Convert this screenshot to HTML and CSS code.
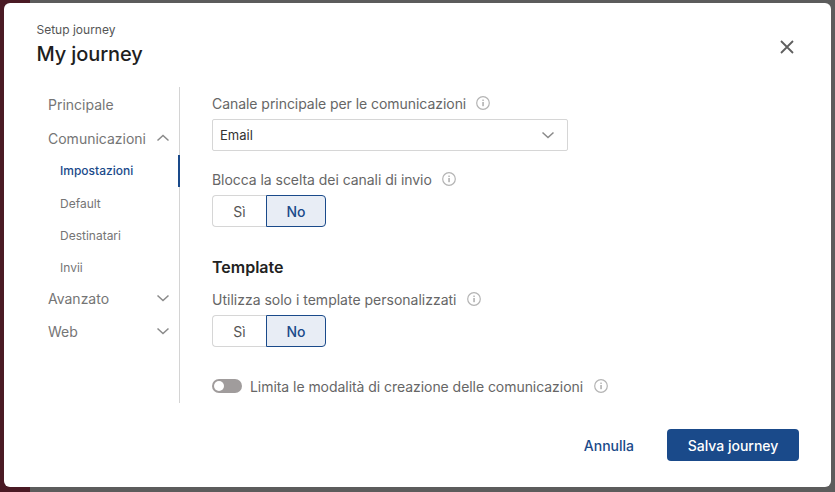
FILE: index.html
```html
<!DOCTYPE html>
<html lang="it">
<head>
  <meta charset="UTF-8" />
  <title>My journey</title>
  <link rel="stylesheet" href="styles.css">
</head>
<body>
  <svg class="icon-defs" width="0" height="0">
    <symbol id="info" viewBox="0 0 14 14">
      <circle cx="7" cy="7" r="6.3" fill="none" stroke="#b4b4b4" stroke-width="1.2" />
      <rect x="6.4" y="6" width="1.3" height="4.2" fill="#a0a0a0" />
      <rect x="6.4" y="3.6" width="1.3" height="1.3" fill="#a0a0a0" />
    </symbol>
    <symbol id="chev-down" viewBox="0 0 14 8">
      <path d="M1.5 1.5 7 6.5l5.5-5" fill="none" stroke="#8a8a8a" stroke-width="1.5" />
    </symbol>
    <symbol id="chev-up" viewBox="0 0 14 8">
      <path d="M1.5 6.5 7 1.5l5.5 5" fill="none" stroke="#8a8a8a" stroke-width="1.5" />
    </symbol>
  </svg>

  <div class="modal">
    <header class="modal-header">
      <div>
        <div class="subtitle">Setup journey</div>
        <h1 class="title">My journey</h1>
      </div>
      <button class="close-btn" aria-label="Chiudi">
        <svg width="16" height="16" viewBox="0 0 16 16"><path d="M2 2l12 12M14 2 2 14" stroke="#5f5f5f" stroke-width="1.8" fill="none" /></svg>
      </button>
    </header>

    <div class="modal-body">
      <nav class="sidenav">
        <a class="nav-item nav-first">Principale</a>
        <a class="nav-item">Comunicazioni <svg class="chev"><use href="#chev-up" /></svg></a>
        <a class="nav-sub active">Impostazioni</a>
        <a class="nav-sub">Default</a>
        <a class="nav-sub">Destinatari</a>
        <a class="nav-sub">Invii</a>
        <a class="nav-item">Avanzato <svg class="chev"><use href="#chev-down" /></svg></a>
        <a class="nav-item nav-last">Web <svg class="chev"><use href="#chev-down" /></svg></a>
      </nav>

      <main class="content">
        <div class="field-label">Canale principale per le comunicazioni <svg class="info"><use href="#info" /></svg></div>
        <div class="select">
          <span>Email</span>
          <svg class="chev"><use href="#chev-down" /></svg>
        </div>

        <div class="field-label field-gap">Blocca la scelta dei canali di invio <svg class="info"><use href="#info" /></svg></div>
        <div class="yesno">
          <button>Sì</button>
          <button class="selected">No</button>
        </div>

        <h2 class="section-title">Template</h2>
        <div class="field-label field-wide">Utilizza solo i template personalizzati <svg class="info"><use href="#info" /></svg></div>
        <div class="yesno">
          <button>Sì</button>
          <button class="selected">No</button>
        </div>

        <div class="switch-row">
          <span class="switch"></span>
          <span>Limita le modalità di creazione delle comunicazioni</span>
          <svg class="info"><use href="#info" /></svg>
        </div>
      </main>
    </div>

    <footer class="modal-footer">
      <button class="btn-link">Annulla</button>
      <button class="btn-primary">Salva journey</button>
    </footer>
  </div>
</body>
</html>
```

FILE: styles.css
```css
html, body {
  height: 100%;
}
body {
  margin: 0;
  padding: 3px 4px 5px;
  box-sizing: border-box;
  font-family: 'Inter', sans-serif;
  color: #666;
  background: linear-gradient(to right, #4a1a24 30px, #5c5c5c 30px);
  overflow: hidden;
}
.icon-defs {
  position: absolute;
}
button {
  font-family: inherit;
  cursor: pointer;
}

.modal {
  height: 100%;
  background: #fff;
  border-radius: 6px;
  display: flex;
  flex-direction: column;
}

/* header */
.modal-header {
  height: 84px;
  box-sizing: border-box;
  padding: 20px 36px 0 32.5px;
  display: flex;
  justify-content: space-between;
  align-items: flex-start;
}
.subtitle {
  font-size: 12px;
  line-height: 14px;
  color: #555;
}
.title {
  margin: 5px 0 0;
  font-size: 20px;
  line-height: 24px;
  font-weight: 500;
  letter-spacing: -0.12px;
  color: #1e1e1e;
}
.close-btn {
  margin-top: 16px;
  padding: 0;
  border: none;
  background: none;
  height: 16px;
}

/* body */
.modal-body {
  display: flex;
  height: 316px;
  padding-left: 32px;
}
.sidenav {
  width: 144px;
  box-sizing: border-box;
  padding-top: 2px;
  border-right: 1px solid #d4d4d4;
}
.nav-item, .nav-sub {
  display: flex;
  align-items: center;
  justify-content: space-between;
  height: 32px;
  box-sizing: border-box;
  padding-right: 9px;
}
.nav-item {
  padding-left: 12px;
  padding-bottom: 2px;
  font-size: 14px;
  color: #757575;
}
.nav-first {
  margin-bottom: 2px;
}
.nav-last {
  padding-bottom: 0;
}
.nav-sub {
  padding-left: 24px;
  font-size: 12px;
  color: #757575;
}
.nav-sub.active {
  color: #1a4a8a;
  font-weight: 500;
  margin-right: -1px;
  padding-bottom: 2px;
  border-right: 2px solid #1a4a8a;
}
.chev {
  width: 14px;
  height: 8px;
}
.info {
  width: 14px;
  height: 14px;
  margin-left: 10px;
  flex: none;
}

.content {
  padding-left: 32px;
  width: 356px;
}
.field-label {
  display: flex;
  align-items: center;
  height: 32px;
  font-size: 14px;
  letter-spacing: -0.05px;
  color: #666;
}
.field-gap {
  margin-top: 12px;
}
.field-wide {
  letter-spacing: 0;
}
.select {
  height: 32px;
  box-sizing: border-box;
  border: 1px solid #d6d6d6;
  border-radius: 2px;
  display: flex;
  align-items: center;
  justify-content: space-between;
  padding: 0 12px 0 7px;
  font-size: 13px;
  color: #333;
}
.yesno {
  display: flex;
  width: 114px;
}
.yesno button {
  height: 32px;
  width: 54px;
  padding: 0;
  font-size: 14px;
  background: #fff;
  color: #555;
  border: 1px solid #d6d6d6;
  border-right: none;
  border-radius: 4px 0 0 4px;
}
.yesno button.selected {
  width: 60px;
  background: #e8edf5;
  color: #1a4a8a;
  font-weight: 500;
  border: 1px solid #1a4a8a;
  border-radius: 0 4px 4px 0;
}
.section-title {
  margin: 28px 0 0;
  font-size: 16px;
  line-height: 24px;
  font-weight: 600;
  color: #222;
}
.section-title + .field-label {
  margin-top: 4px;
}
.switch-row {
  display: flex;
  align-items: center;
  margin-top: 28px;
  height: 22px;
  font-size: 14px;
  letter-spacing: -0.05px;
  color: #666;
  white-space: nowrap;
}
.switch {
  width: 30px;
  height: 14px;
  border-radius: 7px;
  background: #a09c9c;
  margin-right: 8px;
  position: relative;
  flex: none;
}
.switch::after {
  content: "";
  position: absolute;
  left: 2px;
  top: 2px;
  width: 10px;
  height: 10px;
  border-radius: 50%;
  background: #fff;
}
.switch-row .info {
  margin-left: 11px;
}

/* footer */
.modal-footer {
  display: flex;
  justify-content: flex-end;
  align-items: center;
  gap: 33px;
  padding: 26px 32px 0 0;
}
.btn-link {
  border: none;
  background: none;
  padding: 0;
  font-size: 14px;
  font-weight: 500;
  color: #1a4a8a;
}
.btn-primary {
  width: 132px;
  height: 32px;
  border: none;
  border-radius: 4px;
  background: #1a4a8a;
  color: #fff;
  font-size: 14px;
  font-weight: 500;
}
```
